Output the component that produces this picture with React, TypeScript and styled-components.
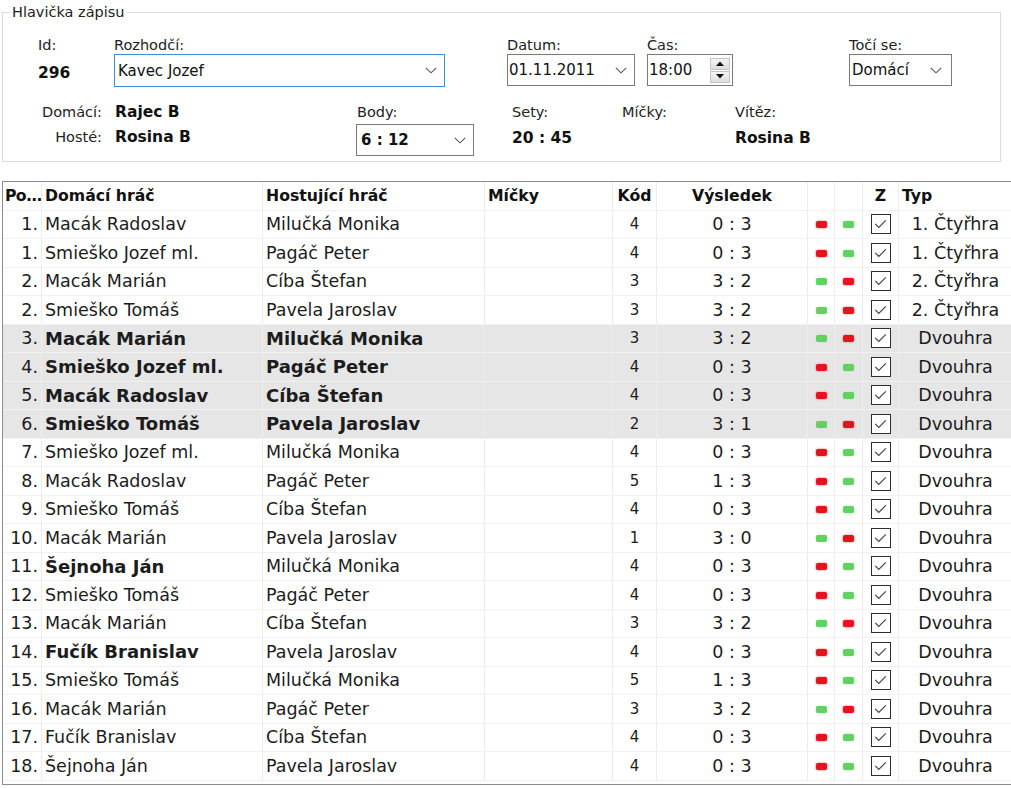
import React from "react";
import styled, { createGlobalStyle, css } from "styled-components";

const Global = createGlobalStyle`
  html, body { margin: 0; padding: 0; background: #ffffff; }
  body {
    font-family: "DejaVu Sans", Verdana, sans-serif;
    color: #1c1c1c;
    overflow: hidden;
  }
`;

const Page = styled.div`
  width: 1011px;
  height: 788px;
  overflow: hidden;
  box-sizing: border-box;
  padding-top: 4px;
`;

/* ---------- header group box ---------- */

const GroupBox = styled.fieldset`
  margin: 0 0 0 2px;
  width: 999px;
  box-sizing: border-box;
  border: 1px solid #dcdcdc;
  padding: 16px 0 5px 0;
  min-inline-size: 0;
`;

const Caption = styled.legend`
  margin-left: 7px;
  padding: 0 2px;
  font-size: 14.5px;
  line-height: 17px;
  color: #222;
`;

const FieldRow = styled.div<{ $top?: number }>`
  display: flex;
  align-items: flex-start;
  margin-top: ${(p) => p.$top ?? 0}px;
`;

const Field = styled.div<{ $w?: number; $ml?: number }>`
  display: flex;
  flex-direction: column;
  flex: none;
  width: ${(p) => (p.$w ? `${p.$w}px` : "auto")};
  margin-left: ${(p) => p.$ml ?? 0}px;
`;

const Label = styled.div<{ $pl?: number }>`
  font-size: 14.5px;
  line-height: 17px;
  height: 17px;
  color: #222;
  padding-left: ${(p) => p.$pl ?? 0}px;
  white-space: nowrap;
`;

const BoldValue = styled.div<{ $mt?: number }>`
  font-weight: bold;
  font-size: 15.5px;
  line-height: 17px;
  color: #111;
  margin-top: ${(p) => p.$mt ?? 0}px;
  white-space: nowrap;
`;

const IdValue = styled.div`
  height: 33px;
  display: flex;
  align-items: center;
  padding-top: 4px;
  box-sizing: border-box;
  font-weight: bold;
  font-size: 15.5px;
  color: #111;
`;

const Combo = styled.div<{ $w: number; $h?: number; $focus?: boolean; $pl?: number; $pr?: number; $mt?: number }>`
  width: ${(p) => p.$w}px;
  height: ${(p) => p.$h ?? 32}px;
  margin-top: ${(p) => p.$mt ?? 0}px;
  box-sizing: border-box;
  border: 1px solid ${(p) => (p.$focus ? "#3c8ddc" : "#7a7a7a")};
  background: #fff;
  display: flex;
  align-items: center;
  justify-content: space-between;
  padding: 0 ${(p) => p.$pr ?? 8}px 0 ${(p) => p.$pl ?? 2}px;
  font-size: 15px;
  color: #111;
`;

const ComboText = styled.span<{ $bold?: boolean }>`
  white-space: nowrap;
  ${(p) =>
    p.$bold &&
    css`
      font-weight: bold;
      font-size: 15px;
    `}
`;

const Spin = styled.div`
  display: flex;
  flex-direction: column;
  gap: 1px;
  width: 20px;
`;

const SpinButton = styled.div`
  height: 12px;
  box-sizing: border-box;
  border: 1px solid #c4c4c4;
  background: linear-gradient(#f4f4f4, #dedede);
  display: flex;
  align-items: center;
  justify-content: center;
`;

const Chevron = () => (
  <svg width="12" height="7" viewBox="0 0 12 7">
    <polyline points="0.8,0.8 6,5.8 11.2,0.8" fill="none" stroke="#555" strokeWidth="1.1" />
  </svg>
);

const Arrow = ({ up }: { up?: boolean }) => (
  <svg width="8" height="5" viewBox="0 0 8 5">
    <polygon points={up ? "0,5 8,5 4,0.5" : "0,0 8,0 4,4.5"} fill="#111" />
  </svg>
);

const TeamGrid = styled.div`
  display: grid;
  grid-template-columns: 99px 241px;
  column-gap: 13px;
  row-gap: 8px;
  flex: none;
`;

const TeamLabel = styled.div`
  text-align: right;
  font-size: 14.5px;
  line-height: 17px;
  color: #222;
`;

/* ---------- match table ---------- */

const COLS = "39px 221px 222px 128px 44px 151px 27px 28px 36px 1fr";

const Table = styled.div`
  margin: 19px 0 0 2px;
  width: 1009px;
  border: 1px solid #8c8c8c;
  border-right: none;
  padding-bottom: 3px;
  background: #fff;
`;

const Row = styled.div<{ $shade?: boolean }>`
  display: grid;
  grid-template-columns: ${COLS};
  height: 28.5px;
  box-sizing: border-box;
  border-bottom: 1px solid #f0f0f0;
  background: ${(p) => (p.$shade ? "#e6e6e6" : "#ffffff")};
`;

type Align = "left" | "center" | "right";

const Cell = styled.div<{ $align?: Align; $pl?: number; $pr?: number; $bold?: boolean; $size?: number; $last?: boolean }>`
  display: flex;
  align-items: center;
  justify-content: ${(p) =>
    p.$align === "center" ? "center" : p.$align === "right" ? "flex-end" : "flex-start"};
  padding: 0 ${(p) => p.$pr ?? 0}px 0 ${(p) => p.$pl ?? 0}px;
  border-right: ${(p) => (p.$last ? "none" : "1px solid #ececec")};
  overflow: hidden;
  white-space: nowrap;
  font-size: ${(p) => p.$size ?? (p.$bold ? 18 : 17.5)}px;
  font-weight: ${(p) => (p.$bold ? "bold" : "normal")};
  color: #1c1c1c;
  min-width: 0;
`;

const HeadCell = styled(Cell)`
  font-weight: bold;
  font-size: 15.7px;
  color: #111;
`;

const PoText = styled.span`
  letter-spacing: -0.7px;
`;

const Mark = styled.span<{ $red?: boolean }>`
  display: block;
  width: 11px;
  height: 7px;
  margin-top: 1px;
  border-radius: 2px;
  background: ${(p) => (p.$red ? "#e5121f" : "#62d162")};
  box-shadow: ${(p) => (p.$red ? "0 0 1.5px 0.6px #f59a9a" : "0 0 1px 0.3px #a8e6a8")};
`;

const CheckBox = styled.span`
  width: 20px;
  height: 20px;
  box-sizing: border-box;
  border: 1.5px solid #2e2e2e;
  background: #fff;
  display: flex;
  align-items: center;
  justify-content: center;
`;

const Tick = () => (
  <svg width="13" height="10" viewBox="0 0 13 10">
    <polyline points="1.2,4.8 4.8,8.4 11.8,1.4" fill="none" stroke="#444" strokeWidth="1.2" />
  </svg>
);

type Match = {
  no: string;
  home: string;
  away: string;
  code: string;
  score: string;
  type: string;
  shade?: boolean;
  homeBold?: boolean;
  awayBold?: boolean;
};

const matches: Match[] = [
  { no: "1.", home: "Macák Radoslav", away: "Milučká Monika", code: "4", score: "0 : 3", type: "1. Čtyřhra" },
  { no: "1.", home: "Smieško Jozef ml.", away: "Pagáč Peter", code: "4", score: "0 : 3", type: "1. Čtyřhra" },
  { no: "2.", home: "Macák Marián", away: "Cíba Štefan", code: "3", score: "3 : 2", type: "2. Čtyřhra" },
  { no: "2.", home: "Smieško Tomáš", away: "Pavela Jaroslav", code: "3", score: "3 : 2", type: "2. Čtyřhra" },
  { no: "3.", home: "Macák Marián", away: "Milučká Monika", code: "3", score: "3 : 2", type: "Dvouhra", shade: true, homeBold: true, awayBold: true },
  { no: "4.", home: "Smieško Jozef ml.", away: "Pagáč Peter", code: "4", score: "0 : 3", type: "Dvouhra", shade: true, homeBold: true, awayBold: true },
  { no: "5.", home: "Macák Radoslav", away: "Cíba Štefan", code: "4", score: "0 : 3", type: "Dvouhra", shade: true, homeBold: true, awayBold: true },
  { no: "6.", home: "Smieško Tomáš", away: "Pavela Jaroslav", code: "2", score: "3 : 1", type: "Dvouhra", shade: true, homeBold: true, awayBold: true },
  { no: "7.", home: "Smieško Jozef ml.", away: "Milučká Monika", code: "4", score: "0 : 3", type: "Dvouhra" },
  { no: "8.", home: "Macák Radoslav", away: "Pagáč Peter", code: "5", score: "1 : 3", type: "Dvouhra" },
  { no: "9.", home: "Smieško Tomáš", away: "Cíba Štefan", code: "4", score: "0 : 3", type: "Dvouhra" },
  { no: "10.", home: "Macák Marián", away: "Pavela Jaroslav", code: "1", score: "3 : 0", type: "Dvouhra" },
  { no: "11.", home: "Šejnoha Ján", away: "Milučká Monika", code: "4", score: "0 : 3", type: "Dvouhra", homeBold: true },
  { no: "12.", home: "Smieško Tomáš", away: "Pagáč Peter", code: "4", score: "0 : 3", type: "Dvouhra" },
  { no: "13.", home: "Macák Marián", away: "Cíba Štefan", code: "3", score: "3 : 2", type: "Dvouhra" },
  { no: "14.", home: "Fučík Branislav", away: "Pavela Jaroslav", code: "4", score: "0 : 3", type: "Dvouhra", homeBold: true },
  { no: "15.", home: "Smieško Tomáš", away: "Milučká Monika", code: "5", score: "1 : 3", type: "Dvouhra" },
  { no: "16.", home: "Macák Marián", away: "Pagáč Peter", code: "3", score: "3 : 2", type: "Dvouhra" },
  { no: "17.", home: "Fučík Branislav", away: "Cíba Štefan", code: "4", score: "0 : 3", type: "Dvouhra" },
  { no: "18.", home: "Šejnoha Ján", away: "Pavela Jaroslav", code: "4", score: "0 : 3", type: "Dvouhra" },
];

const homeWon = (score: string) => {
  const [a, b] = score.split(":").map((s) => parseInt(s.trim(), 10));
  return a > b;
};

export default function App() {
  return (
    <Page>
      <Global />
      <GroupBox>
        <Caption>Hlavička zápisu</Caption>
        <FieldRow>
          <Field $w={76} $ml={35}>
            <Label>Id:</Label>
            <IdValue>296</IdValue>
          </Field>
          <Field $w={393}>
            <Label>Rozhodčí:</Label>
            <Combo $w={331} $h={33} $focus $pl={3} $pr={7}>
              <ComboText>Kavec Jozef</ComboText>
              <Chevron />
            </Combo>
          </Field>
          <Field $w={140}>
            <Label>Datum:</Label>
            <Combo $w={128} $pl={1} $pr={7}>
              <ComboText>01.11.2011</ComboText>
              <Chevron />
            </Combo>
          </Field>
          <Field $w={202}>
            <Label>Čas:</Label>
            <Combo $w={86} $pl={1} $pr={2}>
              <ComboText>18:00</ComboText>
              <Spin>
                <SpinButton>
                  <Arrow up />
                </SpinButton>
                <SpinButton>
                  <Arrow />
                </SpinButton>
              </Spin>
            </Combo>
          </Field>
          <Field>
            <Label>Točí se:</Label>
            <Combo $w={103} $pl={2} $pr={9}>
              <ComboText>Domácí</ComboText>
              <Chevron />
            </Combo>
          </Field>
        </FieldRow>

        <FieldRow $top={17}>
          <TeamGrid>
            <TeamLabel>Domácí:</TeamLabel>
            <BoldValue>Rajec B</BoldValue>
            <TeamLabel>Hosté:</TeamLabel>
            <BoldValue>Rosina B</BoldValue>
          </TeamGrid>
          <Field $w={151}>
            <Label $pl={1}>Body:</Label>
            <Combo $w={118} $mt={3} $pl={4} $pr={7}>
              <ComboText $bold>6 : 12</ComboText>
              <Chevron />
            </Combo>
          </Field>
          <Field $w={110} $ml={5}>
            <Label>Sety:</Label>
            <BoldValue $mt={9}>20 : 45</BoldValue>
          </Field>
          <Field $w={113}>
            <Label>Míčky:</Label>
          </Field>
          <Field>
            <Label>Vítěz:</Label>
            <BoldValue $mt={9}>Rosina B</BoldValue>
          </Field>
        </FieldRow>
      </GroupBox>

      <Table>
        <Row>
          <HeadCell $pl={2}>
            <PoText>Po...</PoText>
          </HeadCell>
          <HeadCell $pl={3}>Domácí hráč</HeadCell>
          <HeadCell $pl={3}>Hostující hráč</HeadCell>
          <HeadCell $pl={3}>Míčky</HeadCell>
          <HeadCell $align="center">Kód</HeadCell>
          <HeadCell $align="center">Výsledek</HeadCell>
          <HeadCell />
          <HeadCell />
          <HeadCell $align="center">Z</HeadCell>
          <HeadCell $pl={3} $last>
            Typ
          </HeadCell>
        </Row>
        {matches.map((m, i) => {
          const won = homeWon(m.score);
          return (
            <Row key={i} $shade={m.shade}>
              <Cell $align="right" $pr={3}>
                {m.no}
              </Cell>
              <Cell $pl={3} $bold={m.homeBold}>
                {m.home}
              </Cell>
              <Cell $pl={3} $bold={m.awayBold}>
                {m.away}
              </Cell>
              <Cell />
              <Cell $align="center" $size={15}>
                {m.code}
              </Cell>
              <Cell $align="center">{m.score}</Cell>
              <Cell $align="center">
                <Mark $red={!won} />
              </Cell>
              <Cell $align="center">
                <Mark $red={won} />
              </Cell>
              <Cell $align="center">
                <CheckBox>
                  <Tick />
                </CheckBox>
              </Cell>
              <Cell $align="center" $last>
                {m.type}
              </Cell>
            </Row>
          );
        })}
      </Table>
    </Page>
  );
}
